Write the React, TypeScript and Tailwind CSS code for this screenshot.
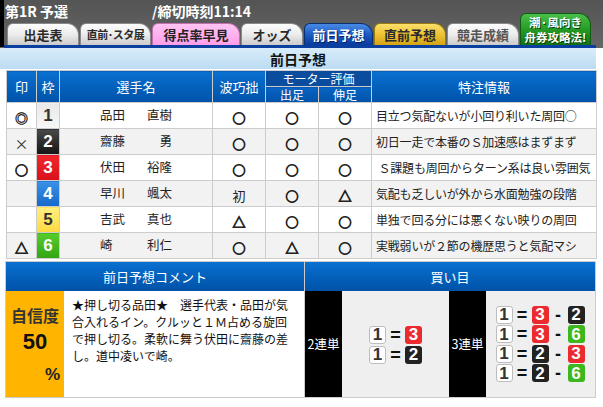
import React from "react";

type Row = {
  mark: string;
  waku: number;
  sei: string;
  mei: string;
  wave: string;
  de: string;
  nobi: string;
  info: string;
};

const rows: Row[] = [
  { mark: "◎", waku: 1, sei: "品田", mei: "直樹", wave: "○", de: "○", nobi: "○", info: "目立つ気配ないが小回り利いた周回○" },
  { mark: "×", waku: 2, sei: "齋藤", mei: "勇", wave: "○", de: "○", nobi: "○", info: "初日一走で本番のＳ加速感はまずまず" },
  { mark: "○", waku: 3, sei: "伏田", mei: "裕隆", wave: "○", de: "○", nobi: "○", info: " Ｓ課題も周回からターン系は良い雰囲気" },
  { mark: "", waku: 4, sei: "早川", mei: "颯太", wave: "初", de: "○", nobi: "△", info: "気配も乏しいが外から水面勉強の段階" },
  { mark: "", waku: 5, sei: "吉武", mei: "真也", wave: "△", de: "○", nobi: "○", info: "単独で回る分には悪くない映りの周回" },
  { mark: "△", waku: 6, sei: "崎", mei: "利仁", wave: "○", de: "△", nobi: "○", info: "実戦弱いが２節の機歴思うと気配マシ" },
];

const wakuCls: Record<number, string> = {
  1: "bg-gradient-to-b from-[#e9e9e9] to-[#f7f7f7] text-[#333]",
  2: "bg-gradient-to-b from-[#4a4a4a] to-[#151515] text-white",
  3: "bg-gradient-to-b from-[#f0262c] to-[#d8101a] text-white",
  4: "bg-gradient-to-b from-[#3a92e6] to-[#1668c8] text-white",
  5: "bg-gradient-to-b from-[#fff07e] to-[#ffd83c] text-[#333]",
  6: "bg-gradient-to-b from-[#58cc2c] to-[#30a612] text-white",
};

const boxCls: Record<number, string> = {
  1: "bg-white text-[#333] border border-[#bdbdbd]",
  2: "bg-[#222222] text-white",
  3: "bg-[#ea2a2f] text-white",
  6: "bg-[#3cb81e] text-white",
};

function NumBox({ n }: { n: number }) {
  return (
    <span
      className={`flex items-center justify-center w-[17px] h-[18px] rounded-[3px] font-['Liberation_Sans',Arial,sans-serif] font-bold text-[17px] leading-none ${boxCls[n]}`}
    >
      {n}
    </span>
  );
}

function Sym({ s }: { s: string }) {
  return (
    <span className="w-[11px] text-center font-['Liberation_Sans',Arial,sans-serif] font-bold text-[18px] leading-none text-[#111]">
      {s}
    </span>
  );
}

function Combo({ nums }: { nums: number[] }) {
  return (
    <div className="flex items-center gap-[4px]">
      <NumBox n={nums[0]} />
      <Sym s="=" />
      <NumBox n={nums[1]} />
      {nums.length > 2 && (
        <>
          <Sym s="-" />
          <NumBox n={nums[2]} />
        </>
      )}
    </div>
  );
}

function Tab({ label, w, cls }: { label: React.ReactNode; w: string; cls: string }) {
  return (
    <div
      className={`${w} h-[22px] flex items-center justify-center rounded-tl-[6px] rounded-tr-[12px] border border-b-0 font-bold leading-none ${cls}`}
    >
      {label}
    </div>
  );
}

function Mark({ s }: { s: string }) {
  if (s === "初") return <span className="text-[13px] leading-none">初</span>;
  if (s === "×") return <span className="text-[14px] leading-none text-[#333]">×</span>;
  if (s === "◎")
    return <span className="text-[13px] leading-none font-bold [-webkit-text-stroke:0.4px_#222]">◎</span>;
  return (
    <span className="text-[13px] leading-none font-bold [-webkit-text-stroke:0.9px_#222]">{s}</span>
  );
}

const grayTab =
  "bg-gradient-to-b from-[#fdfdfd] via-[#ececec] to-[#cbcbcb] border-[#8a8a8a] text-[#2a2a2a]";

const thBlue =
  "border border-[#cccccc] bg-gradient-to-b from-[#0a70d0] to-[#0052a8] text-white font-normal text-[13px] leading-none";

export default function App() {
  return (
    <div className="w-[603px] h-[407px] bg-white overflow-hidden font-['Noto_Sans_CJK_JP','Noto_Sans',sans-serif] text-[#222]">
      {/* header */}
      <div className="flex h-[48px] bg-gradient-to-b from-[#545454] to-[#666666]">
        <div className="w-[4px] h-[47px] bg-black" />
        <div className="flex flex-col w-[592px]">
          <div className="flex items-end h-[45px]">
            <div className="flex flex-col w-[516px] h-full">
              <div className="flex h-[22px] items-center pl-[1px] text-white font-bold text-[14px] leading-none">
                <span className="w-[147px]">第1R 予選</span>
                <span>/締切時刻11:14</span>
              </div>
              <div className="flex items-end h-[23px] pl-[3px] gap-[1px]">
                <Tab label="出走表" w="w-[72px]" cls={`${grayTab} text-[13px]`} />
                <Tab label="直前･スタ展" w="w-[71px]" cls={`${grayTab} text-[11px] tracking-[-0.5px]`} />
                <Tab
                  label="得点率早見"
                  w="w-[88px]"
                  cls="bg-gradient-to-b from-[#ffc4f4] to-[#ff9ee8] border-[#c070b0] text-[#222] text-[13px]"
                />
                <Tab label="オッズ" w="w-[62px]" cls={`${grayTab} text-[13px]`} />
                <Tab
                  label="前日予想"
                  w="w-[69px]"
                  cls="bg-gradient-to-b from-[#4a8ae6] via-[#1c5cc4] to-[#0a3a9c] border-[#0a3070] text-white text-[13px] [text-shadow:1px_1px_0_#062060]"
                />
                <Tab
                  label="直前予想"
                  w="w-[72px]"
                  cls="bg-gradient-to-b from-[#fbe06a] via-[#eec232] to-[#d4a412] border-[#9a7a10] text-[#2a2a2a] text-[13px]"
                />
                <Tab label="競走成績" w="w-[72px]" cls={`${grayTab} text-[#555] text-[13px]`} />
              </div>
            </div>
            <div className="w-[71px] h-[32px] flex flex-col items-center justify-center rounded-tl-[6px] rounded-tr-[12px] border border-b-0 border-[#115a11] bg-gradient-to-b from-[#48c048] via-[#259a25] to-[#137313] text-white font-bold text-[11.5px] leading-[15px] [text-shadow:1px_1px_0_#0a400a]">
              <span className="block">潮·風向き</span>
              <span className="block">舟券攻略法!</span>
            </div>
          </div>
          <div className="h-[3px] bg-[#0b3f9f]" />
        </div>
      </div>

      {/* section title */}
      <div className="w-[596px] h-[21px] flex items-center justify-center bg-gradient-to-b from-[#d8ecfa] to-[#bcdcf2] font-bold text-[14px] leading-none text-[#111]">
        前日予想
      </div>

      {/* table */}
      <table className="mt-[1px] ml-[6px] w-[590px] table-fixed border-collapse border border-[#cccccc]">
        <colgroup>
          <col className="w-[30px]" />
          <col className="w-[23px]" />
          <col className="w-[153px]" />
          <col className="w-[53px]" />
          <col className="w-[53px]" />
          <col className="w-[53px]" />
          <col className="w-[225px]" />
        </colgroup>
        <thead>
          <tr className="h-[16px]">
            <th rowSpan={2} className={thBlue}>印</th>
            <th rowSpan={2} className={thBlue}>枠</th>
            <th rowSpan={2} className={thBlue}>選手名</th>
            <th rowSpan={2} className={thBlue}>波巧拙</th>
            <th colSpan={2} className="h-[16px] p-0 border border-[#cccccc] bg-[#0a4c9e] text-white font-normal text-[12px] leading-[14px]">モーター評価</th>
            <th rowSpan={2} className={thBlue}>特注情報</th>
          </tr>
          <tr className="h-[16px]">
            <th className="h-[16px] p-0 border border-[#cccccc] bg-gradient-to-b from-[#0a64c4] to-[#0052a8] text-white font-normal text-[12px] leading-[14px]">出足</th>
            <th className="h-[16px] p-0 border border-[#cccccc] bg-gradient-to-b from-[#0a64c4] to-[#0052a8] text-white font-normal text-[12px] leading-[14px]">伸足</th>
          </tr>
        </thead>
        <tbody>
          {rows.map((r, i) => (
            <tr key={r.waku} className={`h-[26px] ${i % 2 === 1 ? "bg-[#f2f2f2]" : "bg-white"}`}>
              <td className="border border-[#cccccc] text-center">
                <Mark s={r.mark} />
              </td>
              <td
                className={`border border-[#cccccc] text-center font-['Liberation_Sans',Arial,sans-serif] font-bold text-[17px] leading-none ${wakuCls[r.waku]}`}
              >
                {r.waku}
              </td>
              <td className="border border-[#cccccc]">
                <div className="mx-auto w-[72px] flex justify-between text-[12.5px] leading-none">
                  <span>{r.sei}</span>
                  <span>{r.mei}</span>
                </div>
              </td>
              <td className="border border-[#cccccc] text-center">
                <Mark s={r.wave} />
              </td>
              <td className="border border-[#cccccc] text-center">
                <Mark s={r.de} />
              </td>
              <td className="border border-[#cccccc] text-center">
                <Mark s={r.nobi} />
              </td>
              <td className="border border-[#cccccc] pl-[4px] text-[12px] leading-none whitespace-pre overflow-hidden tracking-[-0.2px]">
                {r.info}
              </td>
            </tr>
          ))}
        </tbody>
      </table>

      {/* bottom */}
      <div className="mt-[2px] ml-[5px] flex w-[591px] h-[137px]">
        <div className="w-[300px] flex flex-col border border-[#cccccc]">
          <div className="h-[29px] flex items-center justify-center bg-gradient-to-b from-[#0a70d0] to-[#0052a8] text-white text-[13px] leading-none">
            前日予想コメント
          </div>
          <div className="flex flex-1">
            <div className="w-[58px] flex flex-col items-center bg-[#ffb400] pt-[15px]">
              <span className="text-[16px] leading-[18px] font-bold text-[#333]">自信度</span>
              <span className="mt-[6px] font-['Liberation_Sans',Arial,sans-serif] text-[22px] leading-[24px] font-bold text-[#111]">50</span>
              <span className="mt-[12px] self-end pr-[4px] font-['Liberation_Sans',Arial,sans-serif] text-[17px] leading-[18px] font-bold text-[#222]">%</span>
            </div>
            <p className="w-[222px] pl-[8px] pt-[5px] text-[12px] leading-[17px] text-[#111] box-content">
              ★押し切る品田★　選手代表・品田が気合入れるイン。クルッと１Ｍ占める旋回で押し切る。柔軟に舞う伏田に齋藤の差し。道中凌いで崎。
            </p>
          </div>
        </div>
        <div className="w-[291px] flex flex-col border border-[#cccccc] border-l-0">
          <div className="h-[29px] flex items-center justify-center bg-gradient-to-b from-[#0a70d0] to-[#0052a8] text-white text-[13px] leading-none">
            買い目
          </div>
          <div className="flex flex-1 bg-[#efefef]">
            <div className="w-[37px] flex items-center justify-center bg-black text-white text-[12.5px] leading-none">
              2連単
            </div>
            <div className="w-[107px] flex flex-col items-center justify-center gap-[2px] pt-[1px]">
              <Combo nums={[1, 3]} />
              <Combo nums={[1, 2]} />
            </div>
            <div className="w-[37px] flex items-center justify-center bg-black text-white text-[12.5px] leading-none">
              3連単
            </div>
            <div className="w-[108px] flex flex-col items-center justify-center gap-[1.5px]">
              <Combo nums={[1, 3, 2]} />
              <Combo nums={[1, 3, 6]} />
              <Combo nums={[1, 2, 3]} />
              <Combo nums={[1, 2, 6]} />
            </div>
          </div>
        </div>
      </div>
    </div>
  );
}
